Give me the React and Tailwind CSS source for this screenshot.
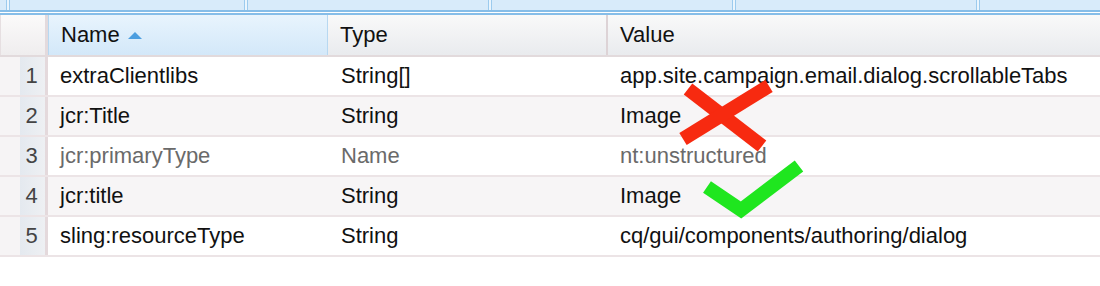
import React from "react";

const rows = [
  { n: 1, name: "extraClientlibs", type: "String[]", value: "app.site.campaign.email.dialog.scrollableTabs" },
  { n: 2, name: "jcr:Title", type: "String", value: "Image" },
  { n: 3, name: "jcr:primaryType", type: "Name", value: "nt:unstructured", muted: true },
  { n: 4, name: "jcr:title", type: "String", value: "Image" },
  { n: 5, name: "sling:resourceType", type: "String", value: "cq/gui/components/authoring/dialog" },
];

function Sep() {
  return (
    <div className="flex h-full w-[4px] shrink-0">
      <div className="w-px bg-[#9ccbee]" />
      <div className="w-[2px] bg-[#eaf5fd]" />
      <div className="w-px bg-[#9ccbee]" />
    </div>
  );
}

export default function App() {
  return (
    <div
      className="relative w-[1100px] h-[286px] bg-white overflow-hidden text-[22px] text-[#111]"
      style={{ fontFamily: '"Liberation Sans", Arial, sans-serif' }}
    >
      {/* top tab strip */}
      <div className="flex h-[10px] bg-[#d8ebfa]">
        <div className="w-[6px]" />
        <Sep />
        <div className="w-[234px]" />
        <Sep />
        <div className="w-[240px]" />
        <Sep />
        <div className="w-[240px]" />
        <Sep />
        <div className="w-[240px]" />
        <Sep />
      </div>
      <div className="h-[2px] bg-[#86bde8]" />
      <div className="h-px bg-white" />
      <div className="h-[2px] bg-[#86bde8]" />

      {/* header */}
      <div className="flex h-[42px] border-b-2 border-[#e2dadc] leading-none">
        <div className="w-[48px] shrink-0 border-l border-[#e6dfe1] border-r-[3px] border-r-[#e3dadd] bg-gradient-to-b from-[#fbfafa] to-[#efedee]" />
        <div className="w-[280px] shrink-0 flex items-center pl-[12px] border-x border-[#b7d8f1] bg-gradient-to-b from-[#e8f4fd] to-[#d3e8f9]">
          <span>Name</span>
          <svg width="14" height="7" viewBox="0 0 14 7" className="ml-[8px] mt-[1px]">
            <polygon points="0,7 7,0 14,7" fill="#4d9fe0" />
          </svg>
        </div>
        <div className="w-[280px] shrink-0 flex items-center pl-[12px] border-r-2 border-[#ddd3d6] bg-gradient-to-b from-[#f9f9f9] to-[#e9ebee]">
          Type
        </div>
        <div className="flex-1 flex items-center pl-[12px] bg-gradient-to-b from-[#f9f9f9] to-[#e9ebee]">
          Value
        </div>
      </div>

      {/* rows */}
      {rows.map((r, i) => (
        <div
          key={r.n}
          className={`flex h-[40px] border-b-2 border-[#ece4e6] leading-none ${
            i % 2 === 1 ? "bg-[#f7f5f6]" : "bg-white"
          } ${r.muted ? "text-[#6a6a6a]" : "text-[#111]"}`}
        >
          <div className="w-[48px] shrink-0 flex border-r-[3px] border-[#e4d9dc]">
            <div className="w-[20px] bg-[#f6f4f5]" />
            <div className="flex-1 flex items-center justify-center pr-[2px] bg-gradient-to-r from-[#e4e9ef] to-[#eef0f3] text-[#444]">
              {r.n}
            </div>
          </div>
          <div className="w-[280px] shrink-0 flex items-center pl-[12px]">{r.name}</div>
          <div className="w-[280px] shrink-0 flex items-center pl-[13px]">{r.type}</div>
          <div className="flex-1 flex items-center pl-[12px] whitespace-nowrap">{r.value}</div>
        </div>
      ))}

      {/* annotation marks */}
      <svg className="absolute left-0 top-0 pointer-events-none" width="1100" height="286">
        <line x1="688" y1="89" x2="762" y2="146" stroke="#f72a10" strokeWidth="14" />
        <line x1="769" y1="86" x2="683" y2="139" stroke="#f72a10" strokeWidth="14" />
        <polyline
          points="707,187 741,210 799,166"
          fill="none"
          stroke="#1fe61f"
          strokeWidth="14"
          strokeLinejoin="miter"
        />
      </svg>
    </div>
  );
}
